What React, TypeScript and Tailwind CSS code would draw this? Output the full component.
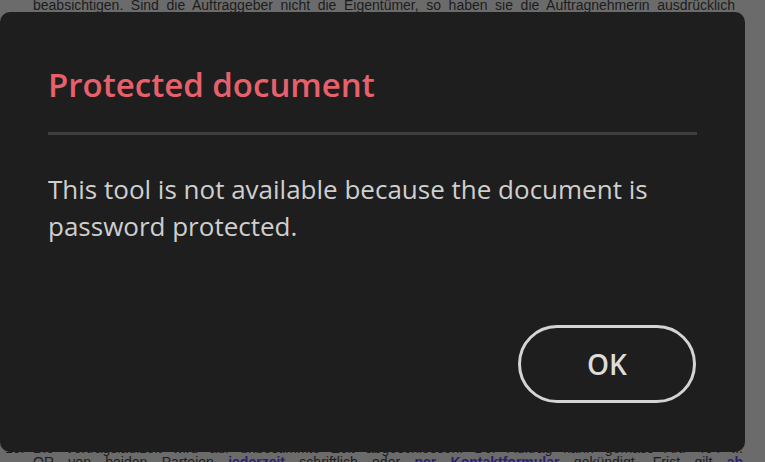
import React from "react";

const App: React.FC = () => {
  return (
    <div className="relative w-[765px] h-[462px] overflow-hidden bg-[#6b6b6b]" style={{ fontFamily: "'Liberation Sans', Arial, sans-serif" }}>
      {/* dimmed page behind */}
      <div className="text-[14px] leading-[14px] text-[#1c1c1c]">
        <p className="ml-[33px] mr-[30px] -mt-[2px] text-justify [text-align-last:justify]">
          beabsichtigen. Sind die Auftraggeber nicht die Eigentümer, so haben sie die Auftragnehmerin ausdrücklich
        </p>
        <div className="mt-[429px] ml-[5px] mr-[22px] flex">
          <span className="w-[28px] shrink-0">10.</span>
          <div className="flex-1">
            <p className="text-justify [text-align-last:justify]">
              Die Vertragslaufzeit wird auf unbestimmte Zeit abgeschlossen. Der Auftrag kann gemäss Art. 404 ff.
            </p>
            <p className="text-justify [text-align-last:justify]">
              OR von beiden Parteien <b className="text-[#2a1f6e]">jederzeit</b> schriftlich oder <b className="text-[#2a1f6e]">per Kontaktformular</b> gekündigt. Frist gilt <b className="text-[#2a1f6e]">ab</b>
            </p>
          </div>
        </div>
      </div>

      {/* dialog */}
      <div
        className="absolute left-0 top-[12px] w-[745px] h-[440px] rounded-[10px] bg-[#1e1e1e] px-[48px] pt-[53px]"
        style={{ fontFamily: "'Open Sans', sans-serif" }}
      >
        <h2 className="text-[33px] leading-[40px] font-semibold text-[#e8606b]">Protected document</h2>
        <div className="mt-[27px] h-[3px] w-[649px] bg-[#3e3e3e]" />
        <p className="mt-[36px] text-[26px] leading-[37px] text-[#cfcfcf]">
          This tool is not available because the document is
          <br />
          password protected.
        </p>
        <div className="mt-[80px] flex justify-end pr-[1px]">
          <button className="w-[178px] h-[78px] rounded-full border-[3px] border-[#d4d4d4] text-[28px] font-semibold text-[#dcdcdc]">
            OK
          </button>
        </div>
      </div>
    </div>
  );
};

export default App;
